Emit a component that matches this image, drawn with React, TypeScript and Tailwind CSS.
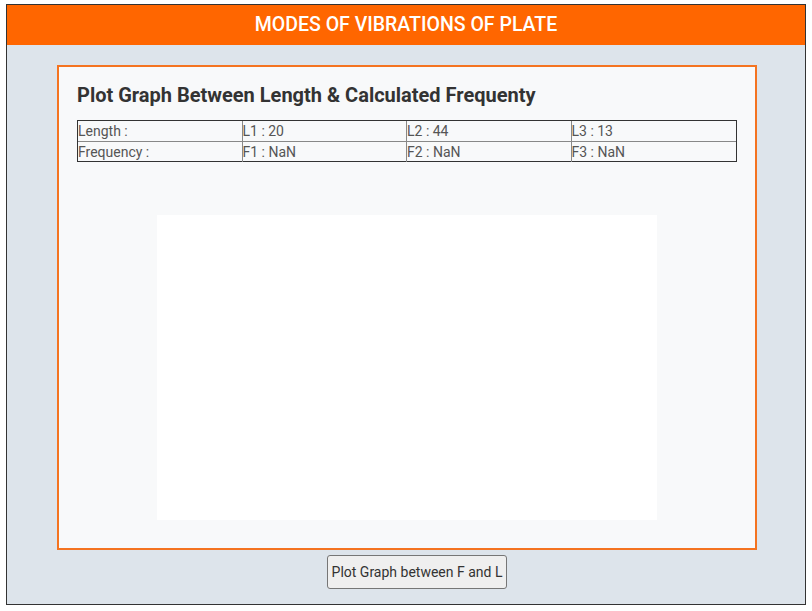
export default function App() {
  const lengths = [20, 44, 13];
  const rows = [
    { label: 'Length :', cells: lengths.map((l, i) => `L${i + 1} : ${l}`) },
    { label: 'Frequency :', cells: lengths.map((_, i) => `F${i + 1} : NaN`) },
  ];
  return (
    <div className="w-[812px] h-[611px] bg-white pt-[4px] pl-[6px] font-['Roboto',sans-serif]">
      <div className="w-[800px] h-[601px] border border-[#333] bg-[#dde4eb] flex flex-col items-center">
        <div className="w-full h-[40px] bg-[#ff6600] flex items-center justify-center text-white text-[19.5px] font-medium">
          MODES OF VIBRATIONS OF PLATE
        </div>
        <div className="mt-[20px] ml-[2px] w-[700px] h-[485px] border-2 border-[#f47320] bg-[#f8f9fa] px-[18px] pt-[15px] flex flex-col">
          <h2 className="text-[20px] font-bold text-[#333] leading-[26px]">
            Plot Graph Between Length &amp; Calculated Frequenty
          </h2>
          <div className="mt-[12px] w-full border border-[#333] text-[14px] text-[#555]">
            {rows.map((row, r) => (
              <div key={r} className={`grid grid-cols-4 h-[20px] ${r > 0 ? 'border-t border-[#888]' : ''}`}>
                <div className="leading-[20px] border-r border-[#888]">{row.label}</div>
                {row.cells.map((c, i) => (
                  <div key={i} className={`leading-[20px] ${i < 2 ? 'border-r border-[#888]' : ''}`}>
                    {c}
                  </div>
                ))}
              </div>
            ))}
          </div>
          <div className="mt-[53px] mx-auto w-[500px] h-[305px] bg-white" />
        </div>
        <button className="mt-[5px] ml-[22px] w-[180px] h-[34px] bg-[#efefef] border border-[#767676] rounded-[3px] text-[14px] text-[#333]">
          Plot Graph between F and L
        </button>
      </div>
    </div>
  );
}
